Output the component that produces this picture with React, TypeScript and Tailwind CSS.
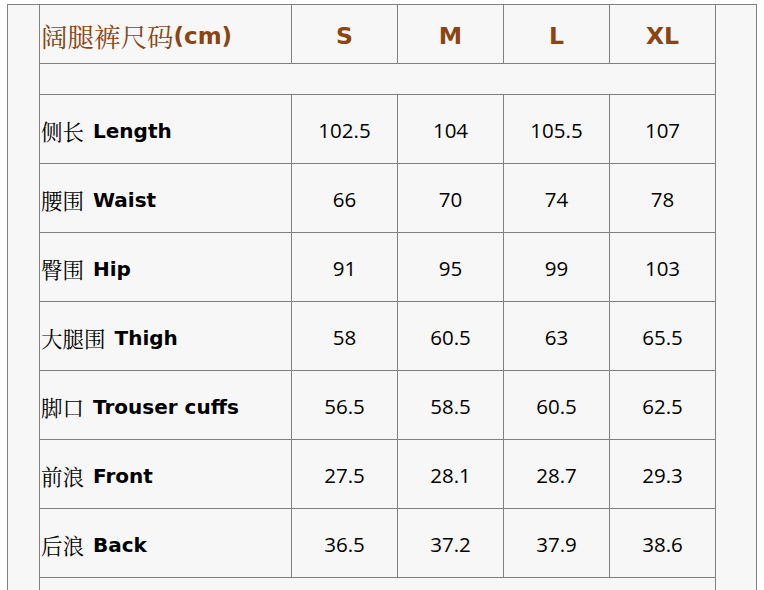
import React from "react";

const sizes = ["S", "M", "L", "XL"];
const rows: { zh: string; en: string; v: string[] }[] = [
  { zh: "侧长", en: "Length", v: ["102.5", "104", "105.5", "107"] },
  { zh: "腰围", en: "Waist", v: ["66", "70", "74", "78"] },
  { zh: "臀围", en: "Hip", v: ["91", "95", "99", "103"] },
  { zh: "大腿围", en: "Thigh", v: ["58", "60.5", "63", "65.5"] },
  { zh: "脚口", en: "Trouser cuffs", v: ["56.5", "58.5", "60.5", "62.5"] },
  { zh: "前浪", en: "Front", v: ["27.5", "28.1", "28.7", "29.3"] },
  { zh: "后浪", en: "Back", v: ["36.5", "37.2", "37.9", "38.6"] },
];

const cjk = { fontFamily: '"Noto Serif CJK SC", "Noto Sans CJK SC", serif' };
const latinBold = { fontFamily: '"DejaVu Sans", Verdana, sans-serif' };
const nums = { fontFamily: '"Open Sans", "Noto Sans", sans-serif' };

export default function App() {
  return (
    <div className="min-h-screen bg-white pt-[4px] pl-[7px]">
      <div className="w-[750px] min-h-[700px] border-x border-t border-[#808080] bg-[#f7f7f7] pl-[31px]">
        <div className="grid w-[677px] grid-cols-[252px_106px_106px_106px_106px] border-l border-[#808080]">
          {/* header */}
          <div className="flex h-[59px] items-center border-r border-b border-[#808080] pl-[1px] pt-[5px] text-[#8b4513]">
            <span style={cjk} className="text-[26.5px] leading-none">阔腿裤尺码</span>
            <span style={latinBold} className="text-[23px] font-bold leading-none">(cm)</span>
          </div>
          {sizes.map((s) => (
            <div
              key={s}
              style={latinBold}
              className="flex h-[59px] items-center justify-center border-r border-b border-[#808080] pt-[5px] text-[23.5px] font-bold leading-none text-[#8b4513]"
            >
              {s}
            </div>
          ))}
          {/* spacer */}
          <div className="col-span-5 h-[31px] border-r border-b border-[#808080]" />
          {rows.map((r) => (
            <React.Fragment key={r.en}>
              <div className="flex h-[69px] items-center border-r border-b border-[#808080] pl-[1px] pt-[3px] text-black">
                <span style={cjk} className="text-[21.5px] leading-none">{r.zh}</span>
                <span style={latinBold} className="ml-[9px] text-[20px] font-bold leading-none">
                  {r.en}
                </span>
              </div>
              {r.v.map((v, i) => (
                <div
                  key={i}
                  style={nums}
                  className="flex h-[69px] items-center justify-center border-r border-b border-[#808080] pt-[3px] text-[20.5px] leading-none text-black"
                >
                  {v}
                </div>
              ))}
            </React.Fragment>
          ))}
          <div className="col-span-5 h-[31px] border-r border-b border-[#808080]" />
        </div>
      </div>
    </div>
  );
}
